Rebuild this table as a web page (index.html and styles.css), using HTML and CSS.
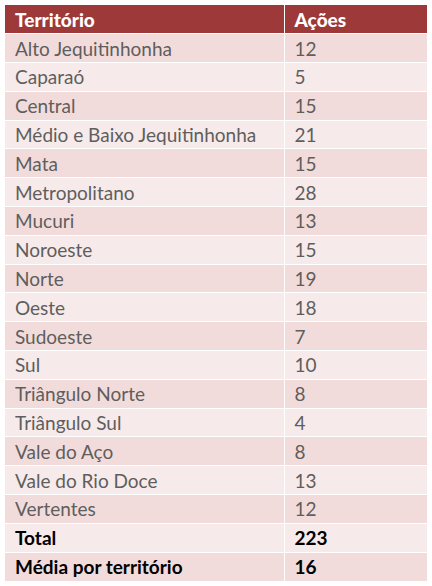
FILE: index.html
```html
<!DOCTYPE html>
<html lang="pt-BR">
<head>
    <meta charset="UTF-8">
    <meta name="viewport" content="width=device-width, initial-scale=1.0">
    <title>Ações por território</title>
    <link rel="stylesheet" href="styles.css">
</head>
<body>

    <table class="acoes">
        <thead>
            <tr>
                <th class="col-nome">Território</th>
                <th class="col-num">Ações</th>
            </tr>
        </thead>
        <tbody>
            <tr><td>Alto Jequitinhonha</td><td>12</td></tr>
            <tr><td>Caparaó</td><td>5</td></tr>
            <tr><td>Central</td><td>15</td></tr>
            <tr><td>Médio e Baixo Jequitinhonha</td><td>21</td></tr>
            <tr><td>Mata</td><td>15</td></tr>
            <tr><td>Metropolitano</td><td>28</td></tr>
            <tr><td>Mucuri</td><td>13</td></tr>
            <tr><td>Noroeste</td><td>15</td></tr>
            <tr><td>Norte</td><td>19</td></tr>
            <tr><td>Oeste</td><td>18</td></tr>
            <tr><td>Sudoeste</td><td>7</td></tr>
            <tr><td>Sul</td><td>10</td></tr>
            <tr><td>Triângulo Norte</td><td>8</td></tr>
            <tr><td>Triângulo Sul</td><td>4</td></tr>
            <tr><td>Vale do Aço</td><td>8</td></tr>
            <tr><td>Vale do Rio Doce</td><td>13</td></tr>
            <tr><td>Vertentes</td><td>12</td></tr>
            <tr class="resumo"><td>Total</td><td>223</td></tr>
            <tr class="resumo"><td>Média por território</td><td>16</td></tr>
        </tbody>
    </table>

</body>
</html>
```

FILE: styles.css
```css
body {
    margin: 5px;
    background: #ffffff;
    font-family: Lato, "Open Sans", sans-serif;
}
.acoes {
    width: 423px;
    border-collapse: collapse;
    table-layout: fixed;
}
.acoes th,
.acoes td {
    box-sizing: border-box;
    height: 28.8px;
    padding: 0 10px;
    border: 1px solid #ffffff;
    text-align: left;
    font-size: 19px;
    line-height: 1;
}
.acoes tr:first-child th { border-top: none; }
.acoes tr th:first-child,
.acoes tr td:first-child { border-left: none; }
.acoes tr th:last-child,
.acoes tr td:last-child { border-right: none; }
.acoes tbody tr:last-child td { border-bottom: none; }

.col-nome { width: 279px; }
.acoes th {
    background: #9d3a39;
    color: #ffffff;
    font-weight: 900;
}
.acoes td {
    color: #5e5e5e;
}
.acoes tbody tr:nth-child(odd) td { background: #f2dcdb; }
.acoes tbody tr:nth-child(even) td { background: #f7eaea; }

.acoes tr.resumo td {
    color: #000000;
    font-weight: bold;
}
```
